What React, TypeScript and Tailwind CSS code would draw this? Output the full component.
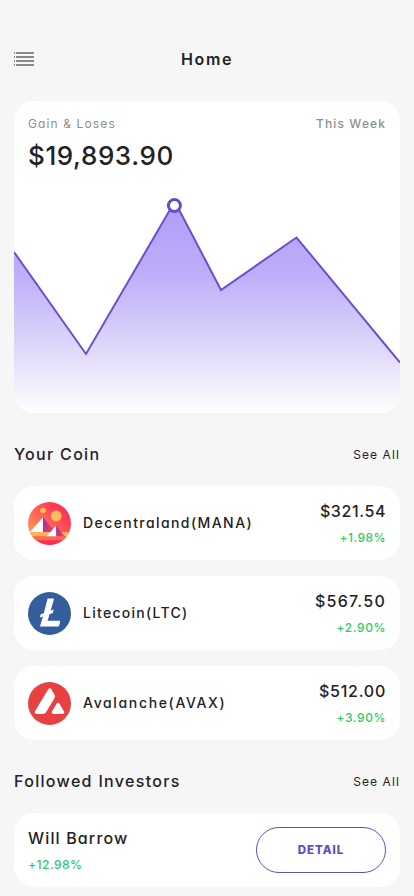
import type { ReactNode } from "react";

type Coin = {
  name: string;
  price: string;
  change: string;
  nameClass: string;
  priceClass: string;
  changeClass: string;
  icon: ReactNode;
};

function MenuIcon() {
  return (
    <svg width="20" height="14" viewBox="0 0 20 14" fill="#8a8a8a" shapeRendering="crispEdges">
      {[0, 4, 8, 12].map((y) => (
        <g key={y}>
          <rect x="0" y={y} width="1" height="2" />
          <rect x="2" y={y} width="18" height="2" />
        </g>
      ))}
    </svg>
  );
}

function ManaIcon() {
  return (
    <svg width="43" height="43" viewBox="0 0 43 43">
      <defs>
        <linearGradient id="mana-bg" x1="0.15" y1="0.85" x2="0.85" y2="0.15">
          <stop offset="0" stopColor="#ff9a50" />
          <stop offset="0.5" stopColor="#ff6058" />
          <stop offset="1" stopColor="#ff2d55" />
        </linearGradient>
        <linearGradient id="mana-side" x1="0" y1="0" x2="1" y2="0.6">
          <stop offset="0" stopColor="#9a30a8" />
          <stop offset="1" stopColor="#f0386c" />
        </linearGradient>
        <clipPath id="mana-clip">
          <circle cx="21.5" cy="21.5" r="21.5" />
        </clipPath>
      </defs>
      <g clipPath="url(#mana-clip)">
        <rect width="43" height="43" fill="url(#mana-bg)" />
        <circle cx="15" cy="8.5" r="2.8" fill="#ffbc5b" />
        <circle cx="28.2" cy="14" r="5.4" fill="#ffbc5b" />
        <path d="M15 15.3V30H1.8z" fill="#fff" />
        <path d="M15 15.3L27 30H15z" fill="url(#mana-side)" />
        <rect y="30" width="43" height="4.3" fill="#ffb059" />
        <rect y="34.3" width="43" height="4" fill="#fc6a4c" />
        <rect y="38.2" width="43" height="5" fill="#ff2d55" />
        <path d="M28.2 23.5V34.3H18.8z" fill="#fff" />
        <path d="M28.2 23.5L36.5 34.3H28.2z" fill="url(#mana-side)" />
      </g>
    </svg>
  );
}

function LitecoinIcon() {
  return (
    <svg width="43" height="43" viewBox="0 0 43 43">
      <circle cx="21.5" cy="21.5" r="21.5" fill="#345d9d" />
      <path
        d="M19.6 6.6h5.4c.7 0 1 .5.8 1.1L22.6 18.6l3.1-1-.9 3.3-3.1 1-2.1 6.9h11.6c.7 0 1.1.6.9 1.2l-1.1 3.7c-.2.6-.6.9-1.2.9H12l2.9-10.1-3.2 1 1-3.2 3.1-1.1 3.8-14.6z"
        fill="#fff"
      />
    </svg>
  );
}

function AvalancheIcon() {
  return (
    <svg width="43" height="43" viewBox="0 0 43 43">
      <circle cx="21.5" cy="21.5" r="21.5" fill="#e84142" />
      <path
        d="M20.2 7.2c.8-1.4 2.4-1.4 3.2 0l2.9 5.2c.8 1.4.8 2.8 0 4.2L18.2 30c-.7 1.2-1.8 1.9-3.2 1.9H8.6c-1.7 0-2.4-1.2-1.6-2.6z"
        fill="#fff"
      />
      <path
        d="M28.7 21.6c.7-1.3 2-1.3 2.7 0l4.5 7.7c.8 1.5.1 2.6-1.5 2.6h-8.8c-1.6 0-2.3-1.1-1.5-2.6z"
        fill="#fff"
      />
    </svg>
  );
}

const coins: Coin[] = [
  {
    name: "Decentraland(MANA)",
    price: "$321.54",
    change: "+1.98%",
    nameClass: "tracking-[1.42px]",
    priceClass: "tracking-[0.6px]",
    changeClass: "tracking-[0.5px]",
    icon: <ManaIcon />,
  },
  {
    name: "Litecoin(LTC)",
    price: "$567.50",
    change: "+2.90%",
    nameClass: "tracking-[1.28px]",
    priceClass: "tracking-[1.25px]",
    changeClass: "tracking-[0.6px]",
    icon: <LitecoinIcon />,
  },
  {
    name: "Avalanche(AVAX)",
    price: "$512.00",
    change: "+3.90%",
    nameClass: "tracking-[1.65px]",
    priceClass: "tracking-[0.75px]",
    changeClass: "tracking-[0.6px]",
    icon: <AvalancheIcon />,
  },
];

function GainChart() {
  return (
    <svg width="386" height="222" viewBox="0 0 386 222" className="block">
      <defs>
        <linearGradient id="gain-fill" x1="0" y1="0" x2="0" y2="1">
          <stop offset="0" stopColor="#b09cf8" />
          <stop offset="0.35" stopColor="#c0aef8" />
          <stop offset="0.6" stopColor="#d5cdf8" />
          <stop offset="0.8" stopColor="#eae5fb" />
          <stop offset="1" stopColor="#ffffff" />
        </linearGradient>
      </defs>
      <path d="M0 61L72 163L160.8 10.5L207 99L282.5 46.5L386 171.5V222H0z" fill="url(#gain-fill)" />
      <path
        d="M0 61L72 163L160.8 10.5L207 99L282.5 46.5L386 171.5"
        fill="none"
        stroke="#6a4fcf"
        strokeWidth="2"
      />
      <circle cx="160.4" cy="14.5" r="6" fill="#fff" stroke="#634bd4" strokeWidth="3" />
    </svg>
  );
}

function SectionHeader({ title }: { title: string }) {
  return (
    <div className="flex h-6 items-center justify-between">
      <h2 className="text-[16px] font-[450] tracking-[1.32px]">{title}</h2>
      <a className="pt-px text-[12px] tracking-[1.1px]">See All</a>
    </div>
  );
}

function CoinRow({ coin }: { coin: Coin }) {
  return (
    <li className="flex h-[74px] items-center rounded-[20px] bg-white px-[14px]">
      {coin.icon}
      <span className={`ml-3 pb-0.5 text-[14px] font-[450] ${coin.nameClass}`}>{coin.name}</span>
      <div className="ml-auto flex flex-col items-end">
        <span className={`text-[16px] leading-6 font-[450] ${coin.priceClass}`}>{coin.price}</span>
        <span
          className={`mt-[6px] text-[12px] leading-[18px] font-medium text-[#2bcb6c] ${coin.changeClass}`}
        >
          {coin.change}
        </span>
      </div>
    </li>
  );
}

export default function App() {
  return (
    <main className="h-[896px] w-[414px] overflow-hidden bg-[#f6f6f6] px-[14px] font-['Inter',sans-serif] text-[#222226] [font-feature-settings:'cv11']">
      {/* Top bar */}
      <header className="grid h-[101px] grid-cols-[20px_1fr_20px] items-center pt-[17px]">
        <MenuIcon />
        <h1 className="text-center text-[16px] font-semibold tracking-[1.6px]">Home</h1>
      </header>

      {/* Balance */}
      <section className="flex h-[312px] flex-col justify-between overflow-hidden rounded-[20px] bg-white">
        <div className="px-[14px] pt-[14px]">
          <div className="flex justify-between text-[12px] leading-[18px] text-[#8e8e93]">
            <span className="tracking-[1.12px]">Gain &amp; Loses</span>
            <span className="font-medium tracking-[1.1px]">This Week</span>
          </div>
          <p className="mt-[3px] text-[26px] leading-[39px] font-[450] tracking-[0.6px]">
            $19,893.90
          </p>
        </div>
        <GainChart />
      </section>

      {/* Coins */}
      <section className="pt-[29px]">
        <SectionHeader title="Your Coin" />
        <ul className="mt-5 flex flex-col gap-4">
          {coins.map((coin) => (
            <CoinRow key={coin.name} coin={coin} />
          ))}
        </ul>
      </section>

      {/* Investors */}
      <section className="pt-[29px]">
        <SectionHeader title="Followed Investors" />
        <div className="mt-5 flex h-[74px] items-center justify-between rounded-[20px] bg-white px-[14px]">
          <div className="flex flex-col">
            <span className="text-[16px] leading-6 font-[450] tracking-[1.15px]">Will Barrow</span>
            <span className="mt-[6px] text-[12px] leading-[18px] font-medium tracking-[0.5px] text-[#2bcb6c]">
              +12.98%
            </span>
          </div>
          <button className="h-[46px] w-[130px] rounded-full border border-[#634bc4] pt-0.5 text-[11.5px] font-extrabold tracking-[1px] text-[#634bc4]">
            DETAIL
          </button>
        </div>
      </section>
    </main>
  );
}
